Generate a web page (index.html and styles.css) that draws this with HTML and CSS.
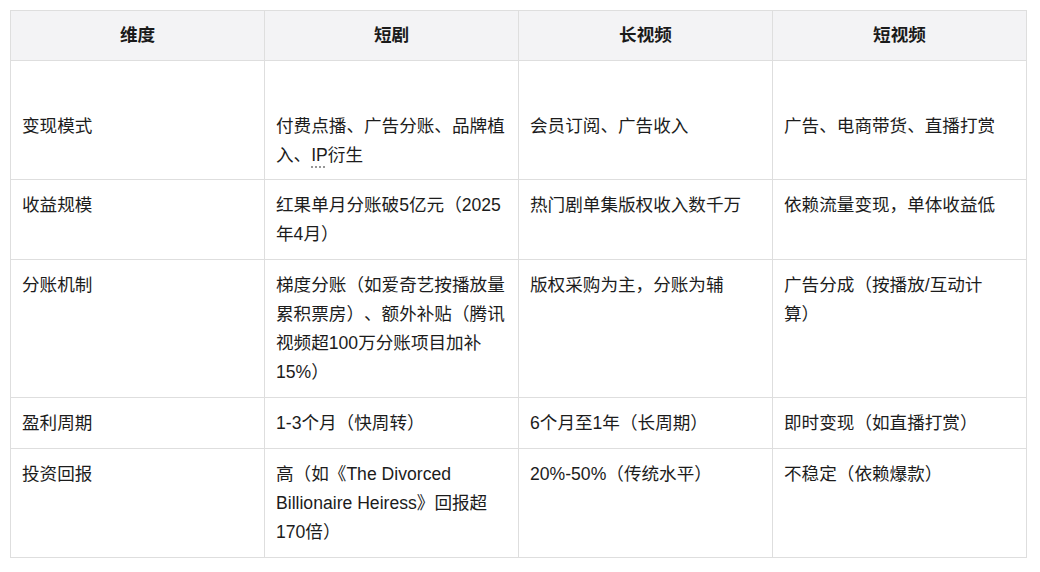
FILE: index.html
```html
<!DOCTYPE html>
<html lang="zh-CN">
<head>
<meta charset="utf-8">
<link rel="stylesheet" href="styles.css">
</head>
<body>
<table class="cmp">
  <thead>
    <tr><th>维度</th><th>短剧</th><th>长视频</th><th>短视频</th></tr>
  </thead>
  <tbody>
    <tr class="tall">
      <td>变现模式</td>
      <td>付费点播、广告分账、品牌植入、<span class="abbr">IP</span>衍生</td>
      <td>会员订阅、广告收入</td>
      <td>广告、电商带货、直播打赏</td>
    </tr>
    <tr>
      <td>收益规模</td>
      <td>红果单月分账破5亿元（2025年4月）</td>
      <td>热门剧单集版权收入数千万</td>
      <td>依赖流量变现，单体收益低</td>
    </tr>
    <tr>
      <td>分账机制</td>
      <td>梯度分账（如爱奇艺按播放量累积票房）、额外补贴（腾讯视频超100万分账项目加补15%）</td>
      <td>版权采购为主，分账为辅</td>
      <td>广告分成（按播放/互动计算）</td>
    </tr>
    <tr>
      <td>盈利周期</td>
      <td>1-3个月（快周转）</td>
      <td>6个月至1年（长周期）</td>
      <td>即时变现（如直播打赏）</td>
    </tr>
    <tr>
      <td>投资回报</td>
      <td>高（如《The Divorced Billionaire Heiress》回报超170倍）</td>
      <td>20%-50%（传统水平）</td>
      <td>不稳定（依赖爆款）</td>
    </tr>
  </tbody>
</table>
</body>
</html>
```

FILE: styles.css
```css
html, body {
  margin: 0;
  background: #ffffff;
}
body {
  padding: 10px 0 0 10px;
  font-family: "Liberation Sans", "Noto Sans CJK SC", sans-serif;
  font-size: 17.6px;
  line-height: 29px;
  color: #1c1c1c;
  text-spacing-trim: space-all;
}
.cmp {
  width: 1017px;
  border-collapse: collapse;
  table-layout: fixed;
}
.cmp th, .cmp td {
  border: 1px solid #dedede;
  width: 25%;
  text-align: left;
  vertical-align: top;
  padding: 10.5px 11px;
}
.cmp th {
  background: #f3f3f5;
  text-align: center;
  font-weight: bold;
  vertical-align: middle;
  padding: 10px 11px;
  color: #1a1a1a;
}
.cmp .tall td {
  padding-top: 50.5px;
  padding-bottom: 9.5px;
}
.abbr {
  text-decoration: underline dotted #8a8a8a;
  text-underline-offset: 6px;
}
```
